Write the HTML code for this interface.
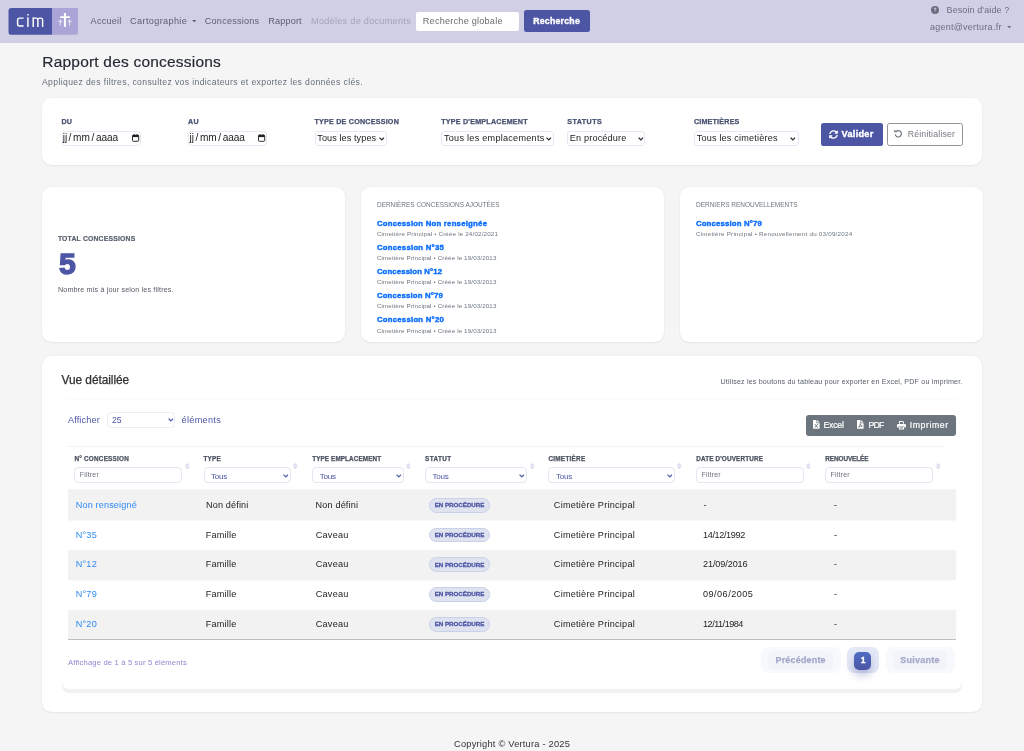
<!DOCTYPE html><html lang="fr"><head><meta charset="utf-8"><title>Rapport des concessions</title><style>
*{box-sizing:border-box;margin:0;padding:0}
html,body{width:1024px;height:751px;overflow:hidden}
body{background:#f5f5f5;font-family:"Liberation Sans",sans-serif;position:relative;color:#333}
.t{position:absolute;white-space:nowrap}
.a{position:absolute}
.card{position:absolute;background:#fff;border-radius:12px;box-shadow:0 0 2px rgba(0,0,0,.05),0 1px 2px rgba(0,0,0,.05)}
.inp{position:absolute;background:#fff;border:1px solid #e5e8f2;border-radius:3px}
svg{position:absolute;overflow:visible}
.tl{position:absolute;left:0;top:0;width:1024px;height:751px;will-change:transform}

</style></head><body>
<div class="a" style="left:0;top:0;width:1024px;height:42.6px;background:#d1cfe5"></div>
<svg style="left:0;top:0" width="90" height="45" viewBox="0 0 90 45"><path d="M11.300 7.900H52V34.700H11.300A2.800 2.800 0 0 1 8.500 31.900V10.700A2.800 2.800 0 0 1 11.300 7.900Z" fill="#4d55a5"/><path d="M52 7.900H78V32.200A2.500 2.500 0 0 1 75.500 34.700H52Z" fill="#a9a5d7"/></svg>
<svg style="left:0;top:0" width="90" height="45" viewBox="0 0 90 45" fill="none" stroke="#fff" stroke-width="1.45" stroke-linecap="butt" stroke-linejoin="round">
<path d="M23.6 18.1 H19.6 Q17.6 18.1 17.6 20.1 V24 Q17.6 26 19.6 26 H23.6"/>
<path d="M27.9 17.2 V26.9"/><path d="M27.9 13.9 V15.6"/>
<path d="M33.2 26.9 V17.2 M33.2 18.1 H36 Q37.9 18.1 37.9 20 V26.9 M37.9 20 Q37.9 18.1 39.8 18.1 H40.7 Q42.6 18.1 42.6 20 V26.9"/>
</svg>
<svg style="left:0;top:0" width="90" height="45" viewBox="0 0 90 45" fill="#fff">
<rect x="63.9" y="13" width="2" height="13.8"/><rect x="60.2" y="16.3" width="9.7" height="1.7"/>
<rect x="59.8" y="19.8" width="0.9" height="5.7" opacity=".85"/><rect x="58.4" y="20.8" width="3.7" height="0.8" opacity=".85"/>
<rect x="69.2" y="19.8" width="0.9" height="5.7" opacity=".85"/><rect x="67.8" y="20.8" width="3.7" height="0.8" opacity=".85"/>
</svg>
<svg style="left:192.400px;top:20.100px" width="4.500" height="2.600" viewBox="0 0 5 3"><path d="M0 0H5L2.5 2.6Z" fill="#5e5d70"/></svg>
<div class="a" style="left:416.1px;top:11.6px;width:103.1px;height:19.2px;background:#fff;border-radius:2px"></div>
<div class="a" style="left:524.2px;top:9.9px;width:65.5px;height:22.5px;background:#4d55a5;border-radius:2.5px"></div>
<svg style="left:931.1px;top:6.3px" width="8" height="8" viewBox="0 0 16 16"><circle cx="8" cy="8" r="8" fill="#6e6d7e"/><path d="M5.4 6.2C5.5 4.6 6.6 3.7 8.1 3.7c1.5 0 2.7.9 2.7 2.3 0 1-.5 1.6-1.3 2.1-.7.4-.9.7-.9 1.300V9.8H7.100V9.200c0-.9.300-1.500 1.100-2 .600-.400.900-.700.900-1.200 0-.600-.500-1-1.100-1-.700 0-1.100.400-1.200 1.200Z M7.900 12.700a.95.95 0 1 1 0-1.900.95.95 0 0 1 0 1.900Z" fill="#d2cfe6"/></svg>
<svg style="left:1006.800px;top:26.200px" width="4.500" height="2.600" viewBox="0 0 5 3"><path d="M0 0H5L2.5 2.6Z" fill="#6e6d7e"/></svg>
<div class="card" style="left:41.6px;top:97.6px;width:940.4px;height:67.5px;border-radius:9.500px"></div>
<div class="inp" style="left:61.6px;top:131.2px;width:79px;height:14.600px;border-radius:3.500px"></div>
<svg style="left:131.6px;top:134.2px" width="7.2" height="7.8" viewBox="0 0 14.400 15.600"><rect x="1" y="2.400" width="12.400" height="12.200" rx="1.600" fill="none" stroke="#222" stroke-width="1.900"/><rect x="1" y="2" width="12.400" height="4.200" fill="#222"/><rect x="3.400" y="0" width="1.800" height="3" fill="#222"/><rect x="9.200" y="0" width="1.800" height="3" fill="#222"/></svg>
<div class="inp" style="left:188.4px;top:131.2px;width:79px;height:14.600px;border-radius:3.500px"></div>
<svg style="left:258.4px;top:134.2px" width="7.2" height="7.8" viewBox="0 0 14.400 15.600"><rect x="1" y="2.400" width="12.400" height="12.200" rx="1.600" fill="none" stroke="#222" stroke-width="1.900"/><rect x="1" y="2" width="12.400" height="4.200" fill="#222"/><rect x="3.400" y="0" width="1.800" height="3" fill="#222"/><rect x="9.200" y="0" width="1.800" height="3" fill="#222"/></svg>
<div class="inp" style="left:314.5px;top:131.3px;width:72.1px;height:14.4px"></div>
<svg style="left:378.5px;top:137.2px" width="5.600" height="3.600" viewBox="0 0 8 5" fill="none" stroke="#222" stroke-width="1.700"><path d="M.8.800 4 4 7.200.800"/></svg>
<div class="inp" style="left:441.2px;top:131.3px;width:113.2px;height:14.4px"></div>
<svg style="left:546.4000000000001px;top:137.2px" width="5.600" height="3.600" viewBox="0 0 8 5" fill="none" stroke="#222" stroke-width="1.700"><path d="M.8.800 4 4 7.200.800"/></svg>
<div class="inp" style="left:567.2px;top:131.3px;width:77.9px;height:14.4px"></div>
<svg style="left:638.0px;top:137.2px" width="5.600" height="3.600" viewBox="0 0 8 5" fill="none" stroke="#222" stroke-width="1.700"><path d="M.8.800 4 4 7.200.800"/></svg>
<div class="inp" style="left:693.9px;top:131.3px;width:104.9px;height:14.4px"></div>
<svg style="left:790.4000000000001px;top:137.2px" width="5.600" height="3.600" viewBox="0 0 8 5" fill="none" stroke="#222" stroke-width="1.700"><path d="M.8.800 4 4 7.200.800"/></svg>
<div class="a" style="left:820.5px;top:123.4px;width:62.5px;height:22.3px;background:#4d55a5;border-radius:2.5px"></div>
<svg style="left:829px;top:130px" width="9" height="9" viewBox="0 0 512 512" fill="#fff"><path d="M370.700 133.300C339.500 104 298.900 88 255.800 88c-77.500.100-144.300 53.200-162.800 126.900-1.300 5.400-6.100 9.200-11.700 9.200H24.100c-7.500 0-13.200-6.800-11.800-14.200C33.900 94.900 134.800 8 256 8c66.400 0 126.800 26.100 171.300 68.700L463 41C478.100 25.900 504 36.600 504 57.900V192c0 13.300-10.700 24-24 24H345.900c-21.400 0-32.100-25.900-17-41l41.800-41.700zM32 296h134.100c21.400 0 32.100 25.900 17 41l-41.800 41.800c31.300 29.300 71.800 45.300 114.900 45.300 77.400-.100 144.300-53.100 162.800-126.800 1.300-5.400 6.100-9.200 11.700-9.200h57.300c7.500 0 13.200 6.800 11.800 14.200C478.100 417.100 377.200 504 256 504c-66.400 0-126.800-26.100-171.300-68.700L49 471c-15.100 15.100-41 4.400-41-16.900V320c0-13.300 10.700-24 24-24z"/></svg>
<div class="a" style="left:887.3px;top:123.4px;width:75.3px;height:22.3px;background:#fff;border:1px solid #8f949b;border-radius:2.5px"></div>
<svg style="left:894px;top:129px" width="8.600" height="8.400" viewBox="0 0 17 16.600" fill="none" stroke="#6c757d" stroke-width="2.300"><path d="M4 5.200A6.200 6.200 0 1 1 2.300 10.400"/><path d="M0.600 0.800V6.600H6.400Z" fill="#6c757d" stroke="none"/></svg>
<div class="card" style="left:41.6px;top:186.9px;width:303.1px;height:155.6px;border-radius:9.500px"></div>
<div class="card" style="left:360.6px;top:186.9px;width:303.1px;height:155.6px;border-radius:9.500px"></div>
<div class="card" style="left:679.6px;top:186.9px;width:303.1px;height:155.6px;border-radius:9.500px"></div>
<div class="card" style="left:41.6px;top:356.2px;width:940.4px;height:355.600px;border-radius:9.500px"></div>
<div class="a" style="left:61.6px;top:399.500px;width:900.9px;height:289px;background:#fff;border-radius:7px;box-shadow:0 4px 1px -0.500px rgba(0,0,0,.055), 0 -2px 3px -1px rgba(0,0,0,.025)"></div>
<div class="inp" style="left:107px;top:411.600px;width:68.200px;height:16.200px;border-radius:4.500px;border-color:#ebedf6"></div>
<svg style="left:167.6px;top:418.2px" width="5.600" height="3.600" viewBox="0 0 8 5" fill="none" stroke="#4d55a5" stroke-width="1.700"><path d="M.8.800 4 4 7.200.800"/></svg>
<div class="a" style="left:805.6px;top:415px;width:150.600px;height:20.600px;background:#6c757d;border-radius:3px"></div>
<svg style="left:812.5px;top:420.400px" width="6.600" height="8.800" viewBox="0 0 12 16"><path d="M0 .8A.8.800 0 0 1 .8 0H6.300V5.700H12V15.200A.8.800 0 0 1 11.200 16H.8A.8.800 0 0 1 0 15.200Z" fill="#fff"/><path d="M7.600 0 12 4.400H7.600Z" fill="#fff"/><path d="M3.300 7.400 8.700 14M8.700 7.400 3.300 14" stroke="#6c757d" stroke-width="1.700" fill="none"/></svg>
<svg style="left:856.9px;top:420.400px" width="6.600" height="8.800" viewBox="0 0 12 16"><path d="M0 .8A.8.800 0 0 1 .8 0H6.300V5.700H12V15.200A.8.800 0 0 1 11.200 16H.8A.8.800 0 0 1 0 15.200Z" fill="#fff"/><path d="M7.600 0 12 4.400H7.600Z" fill="#fff"/><path d="M3 13C5 11 6 8.500 5.800 6.500 7 9 8 10.500 9.500 11.200 7.500 11.200 5 12 3 13Z" stroke="#6c757d" stroke-width="1.700" fill="none"/></svg>
<svg style="left:896.700px;top:420.900px" width="9" height="8.400" viewBox="0 0 16 15" fill="#fff"><path d="M3.500 0H10.500L12.500 2V5H10.800V2.700L9.800 1.700H5.200V5H3.500Z"/><path d="M1.800 5.500H14.200A1.800 1.800 0 0 1 16 7.300V11.500H13V9H3V11.500H0V7.300A1.800 1.800 0 0 1 1.800 5.500Z"/><path d="M3.500 10H12.500V15H3.500Z M5.200 11.600V13.400H10.800V11.600Z" fill-rule="evenodd"/></svg>
<div class="a" style="left:68px;top:446.3px;width:879.5px;height:43.300px;border-top:1px solid #f3f3f6;border-radius:0 6px 0 0;background:#fff"></div>
<div class="inp" style="left:74.4px;top:467px;width:107.5px;height:16.400px;border-radius:4px;border-color:#e4e6f2"></div>
<div class="inp" style="left:203.5px;top:467px;width:87.2px;height:16.400px;border-radius:4px;border-color:#e4e6f2"></div>
<svg style="left:282.7px;top:473.8px" width="5.600" height="3.600" viewBox="0 0 8 5" fill="none" stroke="#4d55a5" stroke-width="1.700"><path d="M.8.800 4 4 7.200.800"/></svg>
<div class="inp" style="left:312.2px;top:467px;width:91.6px;height:16.400px;border-radius:4px;border-color:#e4e6f2"></div>
<svg style="left:395.75px;top:473.8px" width="5.600" height="3.600" viewBox="0 0 8 5" fill="none" stroke="#4d55a5" stroke-width="1.700"><path d="M.8.800 4 4 7.200.800"/></svg>
<div class="inp" style="left:425px;top:467px;width:101.6px;height:16.400px;border-radius:4px;border-color:#e4e6f2"></div>
<svg style="left:518.6px;top:473.8px" width="5.600" height="3.600" viewBox="0 0 8 5" fill="none" stroke="#4d55a5" stroke-width="1.700"><path d="M.8.800 4 4 7.200.800"/></svg>
<div class="inp" style="left:548.4px;top:467px;width:126.6px;height:16.400px;border-radius:4px;border-color:#e4e6f2"></div>
<svg style="left:667px;top:473.8px" width="5.600" height="3.600" viewBox="0 0 8 5" fill="none" stroke="#4d55a5" stroke-width="1.700"><path d="M.8.800 4 4 7.200.800"/></svg>
<div class="inp" style="left:696.25px;top:467px;width:107.5px;height:16.400px;border-radius:4px;border-color:#e4e6f2"></div>
<div class="inp" style="left:825.3px;top:467px;width:107.8px;height:16.400px;border-radius:4px;border-color:#e4e6f2"></div>
<svg style="left:184.79999999999998px;top:463.400px" width="4.600" height="6.200" viewBox="0 0 8.400 11.200" fill="#dcd7ee"><path d="M4.200 0 8.400 4.600H0Z"/><path d="M4.200 11.200 8.400 6.600H0Z"/><rect x="0" y="5" width="8.400" height="1.200"/></svg>
<svg style="left:293.0px;top:463.400px" width="4.600" height="6.200" viewBox="0 0 8.400 11.200" fill="#dcd7ee"><path d="M4.200 0 8.400 4.600H0Z"/><path d="M4.200 11.200 8.400 6.600H0Z"/><rect x="0" y="5" width="8.400" height="1.200"/></svg>
<svg style="left:406.45px;top:463.400px" width="4.600" height="6.200" viewBox="0 0 8.400 11.200" fill="#dcd7ee"><path d="M4.200 0 8.400 4.600H0Z"/><path d="M4.200 11.200 8.400 6.600H0Z"/><rect x="0" y="5" width="8.400" height="1.200"/></svg>
<svg style="left:529.6px;top:463.400px" width="4.600" height="6.200" viewBox="0 0 8.400 11.200" fill="#dcd7ee"><path d="M4.200 0 8.400 4.600H0Z"/><path d="M4.200 11.200 8.400 6.600H0Z"/><rect x="0" y="5" width="8.400" height="1.200"/></svg>
<svg style="left:677.1px;top:463.400px" width="4.600" height="6.200" viewBox="0 0 8.400 11.200" fill="#dcd7ee"><path d="M4.200 0 8.400 4.600H0Z"/><path d="M4.200 11.200 8.400 6.600H0Z"/><rect x="0" y="5" width="8.400" height="1.200"/></svg>
<svg style="left:806.45px;top:463.400px" width="4.600" height="6.200" viewBox="0 0 8.400 11.200" fill="#dcd7ee"><path d="M4.200 0 8.400 4.600H0Z"/><path d="M4.200 11.200 8.400 6.600H0Z"/><rect x="0" y="5" width="8.400" height="1.200"/></svg>
<svg style="left:936.1px;top:463.400px" width="4.600" height="6.200" viewBox="0 0 8.400 11.200" fill="#dcd7ee"><path d="M4.200 0 8.400 4.600H0Z"/><path d="M4.200 11.200 8.400 6.600H0Z"/><rect x="0" y="5" width="8.400" height="1.200"/></svg>
<svg style="left:0;top:0" width="1024" height="751"><rect x="68" y="489.3" width="888.200" height="31.3" fill="#f2f2f2"/></svg>
<div class="a" style="left:429.2px;top:497.9px;width:60.600px;height:14.800px;background:#dfe3f0;border:1px solid #c9d1e9;border-radius:7.400px"></div>
<div class="a" style="left:429.2px;top:527.7px;width:60.600px;height:14.800px;background:#dfe3f0;border:1px solid #c9d1e9;border-radius:7.400px"></div>
<svg style="left:0;top:0" width="1024" height="751"><rect x="68" y="550.0" width="888.200" height="30.3" fill="#f2f2f2"/></svg>
<div class="a" style="left:429.2px;top:557.3px;width:60.600px;height:14.800px;background:#dfe3f0;border:1px solid #c9d1e9;border-radius:7.400px"></div>
<div class="a" style="left:429.2px;top:587.1px;width:60.600px;height:14.800px;background:#dfe3f0;border:1px solid #c9d1e9;border-radius:7.400px"></div>
<svg style="left:0;top:0" width="1024" height="751"><rect x="68" y="609.7" width="888.200" height="29.2" fill="#f2f2f2"/></svg>
<div class="a" style="left:429.2px;top:616.8px;width:60.600px;height:14.800px;background:#dfe3f0;border:1px solid #c9d1e9;border-radius:7.400px"></div>
<div class="a" style="left:68px;top:639px;width:888.2px;height:1px;background:#bdbdbd"></div>
<div class="a" style="left:760.8px;top:647.2px;width:80.0px;height:26.100px;background:#f8f9fc;border-radius:7px"></div>
<div class="a" style="left:768px;top:651px;width:65.2px;height:18.800px;background:#f3f4f9;border-radius:5px"></div>
<div class="a" style="left:886.3px;top:647.2px;width:68.3px;height:26.100px;background:#f8f9fc;border-radius:7px"></div>
<div class="a" style="left:893.1px;top:651px;width:54.1px;height:18.800px;background:#f3f4f9;border-radius:5px"></div>
<div class="a" style="left:847.4px;top:647.2px;width:31.800px;height:26.100px;background:#e5e8f6;border-radius:7px"></div>
<div class="a" style="left:854.3px;top:651.5px;width:17.200px;height:18px;background:linear-gradient(180deg,#4f6dc2,#4d55a5);border-radius:5px;box-shadow:0 5px 8px rgba(77,85,165,.35)"></div>
<div class="tl">
<div class="t" style="left:90.6px;top:17px;font-size:9.15px;line-height:9.15px;color:#5e5d70;letter-spacing:0.211px;">Accueil</div>
<div class="t" style="left:130.1px;top:17px;font-size:9.15px;line-height:9.15px;color:#5e5d70;letter-spacing:0.361px;">Cartographie</div>
<div class="t" style="left:204.8px;top:17px;font-size:9.15px;line-height:9.15px;color:#5e5d70;letter-spacing:0.205px;">Concessions</div>
<div class="t" style="left:268.2px;top:17px;font-size:9.15px;line-height:9.15px;color:#5e5d70;letter-spacing:0.162px;">Rapport</div>
<div class="t" style="left:311.0px;top:17px;font-size:9.15px;line-height:9.15px;color:#a4a3b8;letter-spacing:0.282px;">Modèles de documents</div>
<div class="t" style="left:422.8px;top:17px;font-size:9.15px;line-height:9.15px;color:#6b6b6b;letter-spacing:0.224px;">Recherche globale</div>
<div class="t" style="left:533.2px;top:17px;font-size:8.76px;line-height:8.76px;font-weight:700;color:#fff;letter-spacing:0.228px;-webkit-text-stroke:.35px #fff;">Recherche</div>
<div class="t" style="left:946.6px;top:6px;font-size:8.96px;line-height:8.96px;color:#6e6d7e;letter-spacing:0.116px;">Besoin d'aide ?</div>
<div class="t" style="left:929.9px;top:23px;font-size:8.96px;line-height:8.96px;color:#6e6d7e;letter-spacing:0.279px;">agent@vertura.fr</div>
<div class="t" style="left:42.3px;top:54px;font-size:15.50px;line-height:15.50px;color:#252a33;letter-spacing:0.202px;-webkit-text-stroke:.18px #252a33;">Rapport des concessions</div>
<div class="t" style="left:42.0px;top:78px;font-size:8.60px;line-height:8.60px;color:#646d78;letter-spacing:0.380px;">Appliquez des filtres, consultez vos indicateurs et exportez les données clés.</div>
<div class="t" style="left:61.4px;top:119px;font-size:7.15px;line-height:7.15px;font-weight:700;color:#465070;letter-spacing:0.220px;-webkit-text-stroke:.25px #465070;">DU</div>
<div class="t" style="left:188.1px;top:119px;font-size:7.15px;line-height:7.15px;font-weight:700;color:#465070;letter-spacing:0.220px;-webkit-text-stroke:.25px #465070;">AU</div>
<div class="t" style="left:314.5px;top:119px;font-size:7.15px;line-height:7.15px;font-weight:700;color:#465070;letter-spacing:0.220px;-webkit-text-stroke:.25px #465070;">TYPE DE CONCESSION</div>
<div class="t" style="left:441.2px;top:119px;font-size:7.15px;line-height:7.15px;font-weight:700;color:#465070;letter-spacing:0.220px;-webkit-text-stroke:.25px #465070;">TYPE D'EMPLACEMENT</div>
<div class="t" style="left:567.2px;top:119px;font-size:7.15px;line-height:7.15px;font-weight:700;color:#465070;letter-spacing:0.446px;-webkit-text-stroke:.25px #465070;">STATUTS</div>
<div class="t" style="left:693.9px;top:119px;font-size:7.15px;line-height:7.15px;font-weight:700;color:#465070;letter-spacing:0.204px;-webkit-text-stroke:.25px #465070;">CIMETIÈRES</div>
<div class="t" style="left:62.8px;top:133px;font-size:10.10px;line-height:10.10px;color:#222;">jj</div>
<div class="t" style="left:68.6px;top:133px;font-size:10.10px;line-height:10.10px;color:#222;">/</div>
<div class="t" style="left:73.1px;top:133px;font-size:10.10px;line-height:10.10px;color:#222;letter-spacing:-0.064px;">mm</div>
<div class="t" style="left:91.4px;top:133px;font-size:10.10px;line-height:10.10px;color:#222;">/</div>
<div class="t" style="left:96.0px;top:133px;font-size:10.10px;line-height:10.10px;color:#222;letter-spacing:-0.117px;">aaaa</div>
<div class="t" style="left:189.6px;top:133px;font-size:10.10px;line-height:10.10px;color:#222;">jj</div>
<div class="t" style="left:195.4px;top:133px;font-size:10.10px;line-height:10.10px;color:#222;">/</div>
<div class="t" style="left:199.9px;top:133px;font-size:10.10px;line-height:10.10px;color:#222;letter-spacing:-0.064px;">mm</div>
<div class="t" style="left:218.2px;top:133px;font-size:10.10px;line-height:10.10px;color:#222;">/</div>
<div class="t" style="left:222.8px;top:133px;font-size:10.10px;line-height:10.10px;color:#222;letter-spacing:-0.117px;">aaaa</div>
<div class="t" style="left:317.3px;top:134px;font-size:9.10px;line-height:9.10px;color:#222;letter-spacing:0.091px;">Tous les types</div>
<div class="t" style="left:444.0px;top:134px;font-size:9.10px;line-height:9.10px;color:#222;letter-spacing:0.260px;">Tous les emplacements</div>
<div class="t" style="left:569.7px;top:134px;font-size:9.10px;line-height:9.10px;color:#222;letter-spacing:0.191px;">En procédure</div>
<div class="t" style="left:696.7px;top:134px;font-size:9.10px;line-height:9.10px;color:#222;letter-spacing:0.193px;">Tous les cimetières</div>
<div class="t" style="left:841.6px;top:130px;font-size:9.20px;line-height:9.20px;font-weight:700;color:#fff;letter-spacing:0.266px;-webkit-text-stroke:.35px #fff;">Valider</div>
<div class="t" style="left:907.7px;top:130px;font-size:8.77px;line-height:8.77px;color:#747981;letter-spacing:0.168px;">Réinitialiser</div>
<div class="t" style="left:57.9px;top:236px;font-size:6.80px;line-height:6.80px;font-weight:700;color:#59606f;letter-spacing:0.204px;-webkit-text-stroke:.2px #59606f;">TOTAL CONCESSIONS</div>
<div class="t" style="left:59.0px;top:249px;font-size:30.20px;line-height:30.20px;font-weight:700;color:#4d55a5;-webkit-text-stroke:1.4px #4d55a5;">5</div>
<div class="t" style="left:57.9px;top:286px;font-size:7.23px;line-height:7.23px;color:#555b63;letter-spacing:0.143px;">Nombre mis à jour selon les filtres.</div>
<div class="t" style="left:376.9px;top:202px;font-size:7.10px;line-height:7.10px;color:#6c757d;transform-origin:0 50%;transform:scaleX(0.9087);">DERNIÈRES CONCESSIONS AJOUTÉES</div>
<div class="t" style="left:695.9px;top:202px;font-size:7.10px;line-height:7.10px;color:#6c757d;transform-origin:0 50%;transform:scaleX(0.9130);">DERNIERS RENOUVELLEMENTS</div>
<div class="t" style="left:376.9px;top:220px;font-size:7.79px;line-height:7.79px;font-weight:700;color:#0d6efd;letter-spacing:0.226px;-webkit-text-stroke:.4px #0d6efd;">Concession Non renseignée</div>
<div class="t" style="left:376.9px;top:231px;font-size:6.23px;line-height:6.23px;color:#6c757d;letter-spacing:0.171px;">Cimetière Principal • Créée le 24/02/2021</div>
<div class="t" style="left:376.9px;top:244px;font-size:7.79px;line-height:7.79px;font-weight:700;color:#0d6efd;letter-spacing:0.236px;-webkit-text-stroke:.4px #0d6efd;">Concession N°35</div>
<div class="t" style="left:376.9px;top:255px;font-size:6.23px;line-height:6.23px;color:#6c757d;letter-spacing:0.134px;">Cimetière Principal • Créée le 19/03/2013</div>
<div class="t" style="left:376.9px;top:268px;font-size:7.79px;line-height:7.79px;font-weight:700;color:#0d6efd;letter-spacing:0.110px;-webkit-text-stroke:.4px #0d6efd;">Concession N°12</div>
<div class="t" style="left:376.9px;top:279px;font-size:6.23px;line-height:6.23px;color:#6c757d;letter-spacing:0.134px;">Cimetière Principal • Créée le 19/03/2013</div>
<div class="t" style="left:376.9px;top:292px;font-size:7.79px;line-height:7.79px;font-weight:700;color:#0d6efd;letter-spacing:0.170px;-webkit-text-stroke:.4px #0d6efd;">Concession N°79</div>
<div class="t" style="left:376.9px;top:303px;font-size:6.23px;line-height:6.23px;color:#6c757d;letter-spacing:0.134px;">Cimetière Principal • Créée le 19/03/2013</div>
<div class="t" style="left:376.9px;top:316px;font-size:7.79px;line-height:7.79px;font-weight:700;color:#0d6efd;letter-spacing:0.236px;-webkit-text-stroke:.4px #0d6efd;">Concession N°20</div>
<div class="t" style="left:376.9px;top:328px;font-size:6.23px;line-height:6.23px;color:#6c757d;letter-spacing:0.134px;">Cimetière Principal • Créée le 19/03/2013</div>
<div class="t" style="left:695.9px;top:220px;font-size:7.79px;line-height:7.79px;font-weight:700;color:#0d6efd;letter-spacing:0.170px;-webkit-text-stroke:.4px #0d6efd;">Concession N°79</div>
<div class="t" style="left:695.9px;top:231px;font-size:6.23px;line-height:6.23px;color:#6c757d;letter-spacing:0.245px;">Cimetière Principal • Renouvellement du 03/09/2024</div>
<div class="t" style="left:61.6px;top:375px;font-size:11.90px;line-height:11.90px;color:#2f2f2f;letter-spacing:-0.064px;-webkit-text-stroke:.25px #2f2f2f;">Vue détaillée</div>
<div class="t" style="left:720.5px;top:379px;font-size:7.17px;line-height:7.17px;color:#5a616a;letter-spacing:0.157px;">Utilisez les boutons du tableau pour exporter en Excel, PDF ou imprimer.</div>
<div class="t" style="left:67.9px;top:416px;font-size:9.19px;line-height:9.19px;color:#4d55a5;letter-spacing:0.145px;">Afficher</div>
<div class="t" style="left:111.9px;top:416px;font-size:8.60px;line-height:8.60px;color:#4d55a5;letter-spacing:0.069px;">25</div>
<div class="t" style="left:181.6px;top:416px;font-size:9.19px;line-height:9.19px;color:#4d55a5;letter-spacing:0.273px;">éléments</div>
<div class="t" style="left:823.4px;top:421px;font-size:8.70px;line-height:8.70px;color:#fff;letter-spacing:-0.180px;-webkit-text-stroke:.2px #fff;">Excel</div>
<div class="t" style="left:868.4px;top:421px;font-size:8.70px;line-height:8.70px;color:#fff;letter-spacing:-0.725px;-webkit-text-stroke:.2px #fff;">PDF</div>
<div class="t" style="left:909.8px;top:421px;font-size:8.70px;line-height:8.70px;color:#fff;letter-spacing:0.584px;-webkit-text-stroke:.2px #fff;">Imprimer</div>
<div class="t" style="left:74.4px;top:456px;font-size:6.37px;line-height:6.37px;font-weight:700;color:#4c5261;letter-spacing:0.233px;-webkit-text-stroke:.25px #4c5261;">N° CONCESSION</div>
<div class="t" style="left:203.5px;top:456px;font-size:6.37px;line-height:6.37px;font-weight:700;color:#4c5261;letter-spacing:0.186px;-webkit-text-stroke:.25px #4c5261;">TYPE</div>
<div class="t" style="left:312.2px;top:456px;font-size:6.37px;line-height:6.37px;font-weight:700;color:#4c5261;letter-spacing:0.097px;-webkit-text-stroke:.25px #4c5261;">TYPE EMPLACEMENT</div>
<div class="t" style="left:425.0px;top:456px;font-size:6.37px;line-height:6.37px;font-weight:700;color:#4c5261;letter-spacing:0.410px;-webkit-text-stroke:.25px #4c5261;">STATUT</div>
<div class="t" style="left:548.4px;top:456px;font-size:6.37px;line-height:6.37px;font-weight:700;color:#4c5261;letter-spacing:0.273px;-webkit-text-stroke:.25px #4c5261;">CIMETIÈRE</div>
<div class="t" style="left:696.2px;top:456px;font-size:6.37px;line-height:6.37px;font-weight:700;color:#4c5261;letter-spacing:0.138px;-webkit-text-stroke:.25px #4c5261;">DATE D'OUVERTURE</div>
<div class="t" style="left:825.3px;top:456px;font-size:6.37px;line-height:6.37px;font-weight:700;color:#4c5261;letter-spacing:-0.073px;-webkit-text-stroke:.25px #4c5261;">RENOUVELÉE</div>
<div class="t" style="left:79.7px;top:471px;font-size:7.00px;line-height:7.00px;color:#6c727a;letter-spacing:0.201px;">Filtrer</div>
<div class="t" style="left:211.0px;top:473px;font-size:8.10px;line-height:8.10px;color:#4d55a5;letter-spacing:-0.227px;">Tous</div>
<div class="t" style="left:319.7px;top:473px;font-size:8.10px;line-height:8.10px;color:#4d55a5;letter-spacing:-0.227px;">Tous</div>
<div class="t" style="left:432.5px;top:473px;font-size:8.10px;line-height:8.10px;color:#4d55a5;letter-spacing:-0.227px;">Tous</div>
<div class="t" style="left:555.9px;top:473px;font-size:8.10px;line-height:8.10px;color:#4d55a5;letter-spacing:-0.227px;">Tous</div>
<div class="t" style="left:701.5px;top:471px;font-size:7.00px;line-height:7.00px;color:#6c727a;letter-spacing:0.201px;">Filtrer</div>
<div class="t" style="left:830.6px;top:471px;font-size:7.00px;line-height:7.00px;color:#6c727a;letter-spacing:0.201px;">Filtrer</div>
<div class="t" style="left:75.7px;top:501px;font-size:9.12px;line-height:9.12px;color:#2e8af5;letter-spacing:0.149px;">Non renseigné</div>
<div class="t" style="left:206.0px;top:501px;font-size:9.12px;line-height:9.12px;color:#242424;letter-spacing:0.147px;">Non défini</div>
<div class="t" style="left:315.6px;top:501px;font-size:9.12px;line-height:9.12px;color:#242424;letter-spacing:0.147px;">Non défini</div>
<div class="t" style="left:434.7px;top:502px;font-size:6.20px;line-height:6.20px;font-weight:700;color:#4d55a5;letter-spacing:-0.013px;-webkit-text-stroke:.3px #4d55a5;">EN PROCÉDURE</div>
<div class="t" style="left:553.8px;top:501px;font-size:9.12px;line-height:9.12px;color:#242424;letter-spacing:0.252px;">Cimetière Principal</div>
<div class="t" style="left:703.4px;top:501px;font-size:9.12px;line-height:9.12px;color:#242424;letter-spacing:0.218px;">-</div>
<div class="t" style="left:834.0px;top:501px;font-size:9.12px;line-height:9.12px;color:#242424;letter-spacing:0.218px;">-</div>
<div class="t" style="left:75.7px;top:531px;font-size:9.12px;line-height:9.12px;color:#2e8af5;letter-spacing:0.218px;">N°35</div>
<div class="t" style="left:205.8px;top:531px;font-size:9.12px;line-height:9.12px;color:#242424;letter-spacing:0.184px;">Famille</div>
<div class="t" style="left:315.7px;top:531px;font-size:9.12px;line-height:9.12px;color:#242424;letter-spacing:0.266px;">Caveau</div>
<div class="t" style="left:434.7px;top:532px;font-size:6.20px;line-height:6.20px;font-weight:700;color:#4d55a5;letter-spacing:-0.013px;-webkit-text-stroke:.3px #4d55a5;">EN PROCÉDURE</div>
<div class="t" style="left:553.8px;top:531px;font-size:9.12px;line-height:9.12px;color:#242424;letter-spacing:0.252px;">Cimetière Principal</div>
<div class="t" style="left:703.0px;top:531px;font-size:9.12px;line-height:9.12px;color:#242424;letter-spacing:-0.369px;">14/12/1992</div>
<div class="t" style="left:834.0px;top:531px;font-size:9.12px;line-height:9.12px;color:#242424;letter-spacing:0.218px;">-</div>
<div class="t" style="left:75.7px;top:560px;font-size:9.12px;line-height:9.12px;color:#2e8af5;letter-spacing:0.218px;">N°12</div>
<div class="t" style="left:205.8px;top:560px;font-size:9.12px;line-height:9.12px;color:#242424;letter-spacing:0.184px;">Famille</div>
<div class="t" style="left:315.7px;top:560px;font-size:9.12px;line-height:9.12px;color:#242424;letter-spacing:0.266px;">Caveau</div>
<div class="t" style="left:434.7px;top:562px;font-size:6.20px;line-height:6.20px;font-weight:700;color:#4d55a5;letter-spacing:-0.013px;-webkit-text-stroke:.3px #4d55a5;">EN PROCÉDURE</div>
<div class="t" style="left:553.8px;top:560px;font-size:9.12px;line-height:9.12px;color:#242424;letter-spacing:0.252px;">Cimetière Principal</div>
<div class="t" style="left:703.0px;top:560px;font-size:9.12px;line-height:9.12px;color:#242424;letter-spacing:-0.109px;">21/09/2016</div>
<div class="t" style="left:834.0px;top:560px;font-size:9.12px;line-height:9.12px;color:#242424;letter-spacing:0.218px;">-</div>
<div class="t" style="left:75.7px;top:590px;font-size:9.12px;line-height:9.12px;color:#2e8af5;letter-spacing:0.218px;">N°79</div>
<div class="t" style="left:205.8px;top:590px;font-size:9.12px;line-height:9.12px;color:#242424;letter-spacing:0.184px;">Famille</div>
<div class="t" style="left:315.7px;top:590px;font-size:9.12px;line-height:9.12px;color:#242424;letter-spacing:0.266px;">Caveau</div>
<div class="t" style="left:434.7px;top:591px;font-size:6.20px;line-height:6.20px;font-weight:700;color:#4d55a5;letter-spacing:-0.013px;-webkit-text-stroke:.3px #4d55a5;">EN PROCÉDURE</div>
<div class="t" style="left:553.8px;top:590px;font-size:9.12px;line-height:9.12px;color:#242424;letter-spacing:0.252px;">Cimetière Principal</div>
<div class="t" style="left:703.0px;top:590px;font-size:9.12px;line-height:9.12px;color:#242424;letter-spacing:0.471px;">09/06/2005</div>
<div class="t" style="left:834.0px;top:590px;font-size:9.12px;line-height:9.12px;color:#242424;letter-spacing:0.218px;">-</div>
<div class="t" style="left:75.7px;top:620px;font-size:9.12px;line-height:9.12px;color:#2e8af5;letter-spacing:0.218px;">N°20</div>
<div class="t" style="left:205.8px;top:620px;font-size:9.12px;line-height:9.12px;color:#242424;letter-spacing:0.184px;">Famille</div>
<div class="t" style="left:315.7px;top:620px;font-size:9.12px;line-height:9.12px;color:#242424;letter-spacing:0.266px;">Caveau</div>
<div class="t" style="left:434.7px;top:621px;font-size:6.20px;line-height:6.20px;font-weight:700;color:#4d55a5;letter-spacing:-0.013px;-webkit-text-stroke:.3px #4d55a5;">EN PROCÉDURE</div>
<div class="t" style="left:553.8px;top:620px;font-size:9.12px;line-height:9.12px;color:#242424;letter-spacing:0.252px;">Cimetière Principal</div>
<div class="t" style="left:703.0px;top:620px;font-size:9.12px;line-height:9.12px;color:#242424;letter-spacing:-0.502px;">12/11/1984</div>
<div class="t" style="left:834.0px;top:620px;font-size:9.12px;line-height:9.12px;color:#242424;letter-spacing:0.218px;">-</div>
<div class="t" style="left:68.0px;top:659px;font-size:7.64px;line-height:7.64px;color:#8f88d2;letter-spacing:0.165px;">Affichage de 1 à 5 sur 5 éléments</div>
<div class="t" style="left:775.5px;top:656px;font-size:8.99px;line-height:8.99px;font-weight:700;color:#a4a8c8;letter-spacing:0.185px;-webkit-text-stroke:.25px #a4a8c8;">Précédente</div>
<div class="t" style="left:900.2px;top:656px;font-size:8.99px;line-height:8.99px;font-weight:700;color:#a4a8c8;letter-spacing:0.268px;-webkit-text-stroke:.25px #a4a8c8;">Suivante</div>
<div class="t" style="left:860.8px;top:656px;font-size:8.60px;line-height:8.60px;font-weight:700;color:#fff;-webkit-text-stroke:.3px #fff;">1</div>
<div class="t" style="left:454.0px;top:740px;font-size:9.31px;line-height:9.31px;color:#333;letter-spacing:0.203px;">Copyright © Vertura - 2025</div>
</div>
</body></html>
